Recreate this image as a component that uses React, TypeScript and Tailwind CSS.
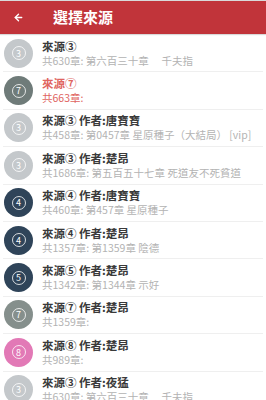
import { ArrowLeft } from "lucide-react";

type Source = {
  num: string;
  author?: string;
  info: string;
  color: string;
  active?: boolean;
};

const sources: Source[] = [
  { num: "3", info: "共630章: 第六百三十章　 千夫指", color: "bg-[#c4c8cb]" },
  { num: "7", info: "共663章:", color: "bg-[#6f7b79]", active: true },
  { num: "3", author: "唐寶寶", info: "共458章: 第0457章 星原種子（大結局） [vip]", color: "bg-[#c4c8cb]" },
  { num: "3", author: "楚昂", info: "共1686章: 第五百五十七章 死道友不死貧道", color: "bg-[#c4c8cb]" },
  { num: "4", author: "唐寶寶", info: "共460章: 第457章 星原種子", color: "bg-[#2f4459]" },
  { num: "4", author: "楚昂", info: "共1357章: 第1359章 陰德", color: "bg-[#2f4459]" },
  { num: "5", author: "楚昂", info: "共1342章: 第1344章 示好", color: "bg-[#2f4459]" },
  { num: "7", author: "楚昂", info: "共1359章:", color: "bg-[#858f8c]" },
  { num: "8", author: "楚昂", info: "共989章:", color: "bg-[#e279b6]" },
  { num: "3", author: "夜猛", info: "共630章: 第六百三十章　 千夫指", color: "bg-[#c4c8cb]" },
];

const circled: Record<string, string> = { "3": "③", "4": "④", "5": "⑤", "7": "⑦", "8": "⑧" };

function Avatar({ num, color }: { num: string; color: string }) {
  return (
    <div className={`flex h-[29px] w-[29px] shrink-0 items-center justify-center rounded-full ${color}`}>
      <span className="flex h-[14px] w-[14px] items-center justify-center rounded-full border border-white/80 text-[9px] leading-none text-white">
        {num}
      </span>
    </div>
  );
}

export default function App() {
  return (
    <div className="h-[400px] w-[266px] overflow-hidden bg-white font-['Noto_Sans_CJK_TC','Liberation_Sans',sans-serif]">
      {/* Header */}
      <div className="h-px bg-[#d9d9d9]" />
      <div className="flex h-[33px] items-center bg-[#c1343a] shadow-[0_1px_1px_rgba(0,0,0,0.15)]">
        <ArrowLeft className="ml-[13px] h-[11px] w-[11px] text-white" strokeWidth={3} />
        <span className="ml-[29px] text-[15px] font-bold text-white">選擇來源</span>
      </div>

      {/* Source list */}
      <div className="pt-px">
        {sources.map((s, i) => (
          <div
            key={i}
            className="mx-[3px] flex h-[37.4px] items-center border-b border-[#efefef]"
          >
            <div className="ml-px">
              <Avatar num={s.num} color={s.color} />
            </div>
            <div className="ml-[9px] flex min-w-0 flex-col">
              <div
                className={`whitespace-nowrap text-[11.5px] font-bold leading-[15px] ${
                  s.active ? "text-[#e0655f]" : "text-[#3a3a3a]"
                }`}
              >
                來源{circled[s.num]}
                {s.author && <span> 作者:{s.author}</span>}
              </div>
              <div
                className={`whitespace-nowrap text-[10.5px] leading-[14px] ${
                  s.active ? "text-[#e0655f]" : "text-[#b3b3b3]"
                }`}
              >
                {s.info}
              </div>
            </div>
          </div>
        ))}
      </div>
    </div>
  );
}
